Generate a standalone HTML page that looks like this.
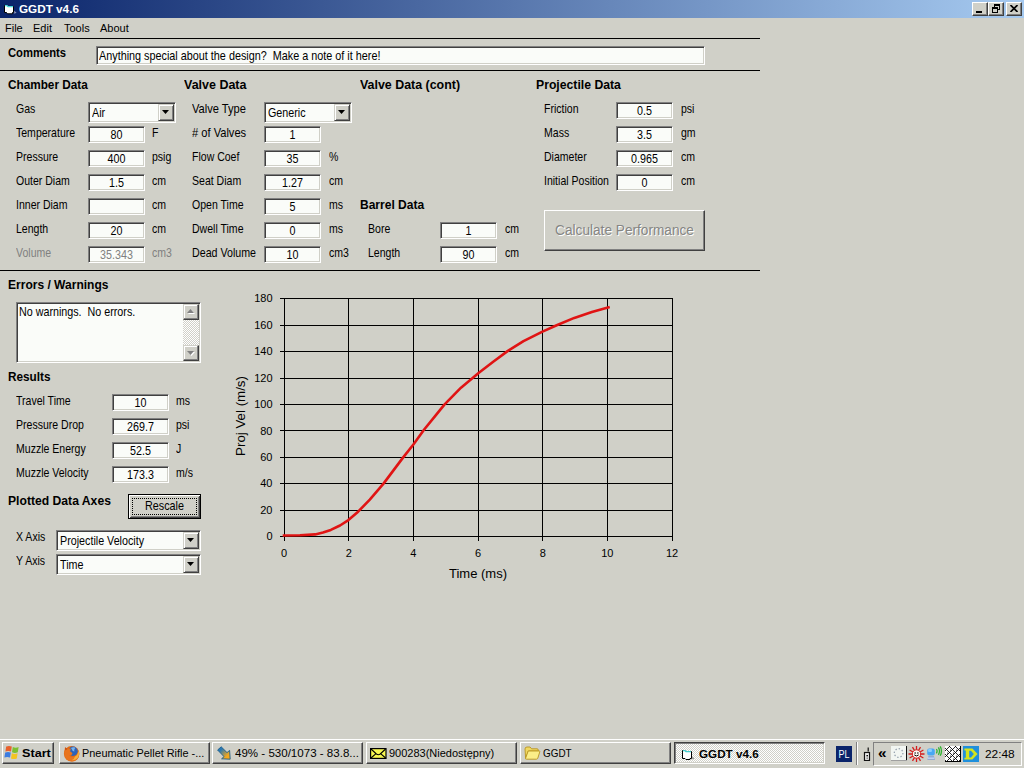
<!DOCTYPE html>
<html><head><meta charset="utf-8"><title>GGDT v4.6</title>
<style>
html,body{margin:0;padding:0;}
body{width:1024px;height:768px;overflow:hidden;background:#d0d0c8;position:relative;font-family:"Liberation Sans",Arial,sans-serif;font-size:13px;color:#000;}
.t{position:absolute;white-space:pre;line-height:15px;height:15px;transform-origin:0 50%;}
.b{font-weight:bold;}
.in{position:absolute;box-sizing:border-box;background:#fafcf9;border:1px solid;border-color:#808080 #fff #fff #808080;box-shadow:inset 1px 1px 0 #404040,inset -1px -1px 0 #d0d0c8;overflow:hidden;}
.iv{position:absolute;left:0;right:0;white-space:pre;line-height:15px;height:15px;transform:scaleX(0.825);}
.cb{position:absolute;right:1px;top:1px;width:16px;box-sizing:border-box;background:#d0d0c8;border:1px solid;border-color:#d0d0c8 #404040 #404040 #d0d0c8;box-shadow:inset 1px 1px 0 #fff,inset -1px -1px 0 #808080;}
.sb{position:absolute;right:1px;top:1px;bottom:1px;width:16px;background:#e8e8e4 repeating-conic-gradient(#fff 0% 25%,#d0d0c8 0% 50%) 0 0/2px 2px;}
.btn.sbb{border-color:#d0d0c8 #404040 #404040 #d0d0c8;box-shadow:inset -1px -1px 0 #808080,inset 1px 1px 0 #fff;}
.hl{position:absolute;left:0;width:760px;height:1px;background:#000;}
.tb{position:absolute;left:0;top:0;width:1024px;height:18px;background:linear-gradient(to right,#0a246a 0%,#a6caf0 100%);}
.tt{position:absolute;left:19px;top:1px;transform:scaleX(1.065);transform-origin:0 50%;color:#fff;font-weight:bold;font-size:11px;line-height:16px;white-space:pre;}
.k{position:absolute;white-space:pre;font-size:11px;line-height:16px;height:16px;}
.btn.act{background:#e8e8e4 repeating-conic-gradient(#fff 0% 25%,#d0d0c8 0% 50%) 0 0/2px 2px;border-color:#404040 #fff #fff #404040;box-shadow:inset 1px 1px 0 #808080,inset -1px -1px 0 #d0d0c8;}
.btn{position:absolute;box-sizing:border-box;background:#d0d0c8;border:1px solid;border-color:#fff #404040 #404040 #fff;box-shadow:inset -1px -1px 0 #808080,inset 1px 1px 0 #d0d0c8;}
</style></head><body>

<div class="tb"><svg style="position:absolute;left:3px;top:4px" width="15" height="11" viewBox="0 0 15 11"><path d="M1.5 1.5 H4 L5 2.5 H10.5 V8.5 H9.5 V9.8 H4.5 L3.5 8.5 H1.5z" fill="#fff" stroke="#000" stroke-width="1"/><path d="M2 1.6 H4 L5 2.6 H10" stroke="#48d8d8" stroke-width="1.3" fill="none"/><path d="M11.2 6.8 L13.6 8.8 L11.2 9.8z" fill="#9098b8"/></svg><div class="tt">GGDT v4.6</div>
<div class="btn" style="left:972px;top:2px;width:16px;height:14px"><div style="position:absolute;left:3px;top:8px;width:6px;height:2px;background:#000"></div></div>
<div class="btn" style="left:988px;top:2px;width:16px;height:14px"><svg style="position:absolute;left:2px;top:1px" width="10" height="10" viewBox="0 0 10 10" shape-rendering="crispEdges"><path d="M3 0h6v2h-6zM8 2h1v4h-1zM3 2h1v1h-1zM7 5h1v1h-1z" fill="#000"/><path d="M1 3h6v2h-6zM1 5h1v4h-1zM6 5h1v4h-1zM1 8h6v1h-6z" fill="#000"/></svg></div>
<div class="btn" style="left:1006px;top:2px;width:16px;height:14px"><svg style="position:absolute;left:3px;top:2px" width="8" height="7" viewBox="0 0 8 7"><path d="M0.5 0 L7.5 7 M7.5 0 L0.5 7" stroke="#000" stroke-width="1.7"/></svg></div>
</div>
<div class="t" style="left:5px;top:21px;font-size:11px;transform:none">File</div>
<div class="t" style="left:33px;top:21px;font-size:11px;transform:none">Edit</div>
<div class="t" style="left:64px;top:21px;font-size:11px;transform:none">Tools</div>
<div class="t" style="left:100px;top:21px;font-size:11px;transform:none">About</div>
<div class="hl" style="top:38px"></div>
<div class="t b" style="left:8px;top:45px;transform:scaleX(0.865);">Comments</div>
<div class="in" style="left:96px;top:46px;width:609px;height:19px;"><div class="iv" style="text-align:left;top:1px;left:2px;transform-origin:0 50%;transform:scaleX(.832);">Anything special about the design?  Make a note of it here!</div></div>
<div class="hl" style="top:70px"></div>
<div class="t b" style="left:8px;top:77px;transform:scaleX(0.905);">Chamber Data</div>
<div class="t b" style="left:184px;top:77px;transform:scaleX(0.96);">Valve Data</div>
<div class="t b" style="left:360px;top:77px;transform:scaleX(0.955);">Valve Data (cont)</div>
<div class="t b" style="left:536px;top:77px;transform:scaleX(0.94);">Projectile Data</div>
<div class="t " style="left:16px;top:101px;transform:scaleX(0.81);">Gas</div>
<div class="in" style="left:88px;top:102px;width:88px;height:21px;"><div class="iv" style="text-align:left;left:3px;top:2px;transform-origin:0 50%">Air</div><div class="cb" style="height:17px"><svg width="7" height="4" viewBox="0 0 7 4" style="position:absolute;left:3px;top:5px"><path d="M0 0h7L3.5 4z" fill="#000"/></svg></div></div>
<div class="t " style="left:16px;top:125px;transform:scaleX(0.81);">Temperature</div>
<div class="in" style="left:88px;top:126px;width:57px;height:17px;"><div class="iv" style="text-align:center;top:0px;">80</div></div>
<div class="t " style="left:152px;top:125px;transform:scaleX(0.81);">F</div>
<div class="t " style="left:16px;top:149px;transform:scaleX(0.81);">Pressure</div>
<div class="in" style="left:88px;top:150px;width:57px;height:17px;"><div class="iv" style="text-align:center;top:0px;">400</div></div>
<div class="t " style="left:152px;top:149px;transform:scaleX(0.81);">psig</div>
<div class="t " style="left:16px;top:173px;transform:scaleX(0.81);">Outer Diam</div>
<div class="in" style="left:88px;top:174px;width:57px;height:17px;"><div class="iv" style="text-align:center;top:0px;">1.5</div></div>
<div class="t " style="left:152px;top:173px;transform:scaleX(0.81);">cm</div>
<div class="t " style="left:16px;top:197px;transform:scaleX(0.81);">Inner Diam</div>
<div class="in" style="left:88px;top:198px;width:57px;height:17px;"><div class="iv" style="text-align:center;top:0px;"></div></div>
<div class="t " style="left:152px;top:197px;transform:scaleX(0.81);">cm</div>
<div class="t " style="left:16px;top:221px;transform:scaleX(0.81);">Length</div>
<div class="in" style="left:88px;top:222px;width:57px;height:17px;"><div class="iv" style="text-align:center;top:0px;">20</div></div>
<div class="t " style="left:152px;top:221px;transform:scaleX(0.81);">cm</div>
<div class="t " style="left:16px;top:245px;transform:scaleX(0.81);color:#808080;">Volume</div>
<div class="in" style="left:88px;top:246px;width:57px;height:17px;"><div class="iv" style="color:#808080;text-align:center;top:0px;">35.343</div></div>
<div class="t " style="left:152px;top:245px;transform:scaleX(0.81);color:#808080;">cm3</div>
<div class="t " style="left:192px;top:101px;transform:scaleX(0.855);">Valve Type</div>
<div class="in" style="left:264px;top:102px;width:88px;height:21px;"><div class="iv" style="text-align:left;left:3px;top:2px;transform-origin:0 50%">Generic</div><div class="cb" style="height:17px"><svg width="7" height="4" viewBox="0 0 7 4" style="position:absolute;left:3px;top:5px"><path d="M0 0h7L3.5 4z" fill="#000"/></svg></div></div>
<div class="t " style="left:192px;top:125px;transform:scaleX(0.855);"># of Valves</div>
<div class="in" style="left:264px;top:126px;width:57px;height:17px;"><div class="iv" style="text-align:center;top:0px;">1</div></div>
<div class="t " style="left:192px;top:149px;transform:scaleX(0.81);">Flow Coef</div>
<div class="in" style="left:264px;top:150px;width:57px;height:17px;"><div class="iv" style="text-align:center;top:0px;">35</div></div>
<div class="t " style="left:329px;top:149px;transform:scaleX(0.81);">%</div>
<div class="t " style="left:192px;top:173px;transform:scaleX(0.81);">Seat Diam</div>
<div class="in" style="left:264px;top:174px;width:57px;height:17px;"><div class="iv" style="text-align:center;top:0px;">1.27</div></div>
<div class="t " style="left:329px;top:173px;transform:scaleX(0.81);">cm</div>
<div class="t " style="left:192px;top:197px;transform:scaleX(0.81);">Open Time</div>
<div class="in" style="left:264px;top:198px;width:57px;height:17px;"><div class="iv" style="text-align:center;top:0px;">5</div></div>
<div class="t " style="left:329px;top:197px;transform:scaleX(0.81);">ms</div>
<div class="t " style="left:192px;top:221px;transform:scaleX(0.81);">Dwell Time</div>
<div class="in" style="left:264px;top:222px;width:57px;height:17px;"><div class="iv" style="text-align:center;top:0px;">0</div></div>
<div class="t " style="left:329px;top:221px;transform:scaleX(0.81);">ms</div>
<div class="t " style="left:192px;top:245px;transform:scaleX(0.82);">Dead Volume</div>
<div class="in" style="left:264px;top:246px;width:57px;height:17px;"><div class="iv" style="text-align:center;top:0px;">10</div></div>
<div class="t " style="left:329px;top:245px;transform:scaleX(0.81);">cm3</div>
<div class="t b" style="left:360px;top:197px;transform:scaleX(0.925);">Barrel Data</div>
<div class="t " style="left:368px;top:221px;transform:scaleX(0.81);">Bore</div>
<div class="in" style="left:440px;top:222px;width:57px;height:17px;"><div class="iv" style="text-align:center;top:0px;">1</div></div>
<div class="t " style="left:505px;top:221px;transform:scaleX(0.81);">cm</div>
<div class="t " style="left:368px;top:245px;transform:scaleX(0.81);">Length</div>
<div class="in" style="left:440px;top:246px;width:57px;height:17px;"><div class="iv" style="text-align:center;top:0px;">90</div></div>
<div class="t " style="left:505px;top:245px;transform:scaleX(0.81);">cm</div>
<div class="t " style="left:544px;top:101px;transform:scaleX(0.81);">Friction</div>
<div class="in" style="left:616px;top:102px;width:57px;height:17px;"><div class="iv" style="text-align:center;top:0px;">0.5</div></div>
<div class="t " style="left:681px;top:101px;transform:scaleX(0.81);">psi</div>
<div class="t " style="left:544px;top:125px;transform:scaleX(0.81);">Mass</div>
<div class="in" style="left:616px;top:126px;width:57px;height:17px;"><div class="iv" style="text-align:center;top:0px;">3.5</div></div>
<div class="t " style="left:681px;top:125px;transform:scaleX(0.81);">gm</div>
<div class="t " style="left:544px;top:149px;transform:scaleX(0.81);">Diameter</div>
<div class="in" style="left:616px;top:150px;width:57px;height:17px;"><div class="iv" style="text-align:center;top:0px;">0.965</div></div>
<div class="t " style="left:681px;top:149px;transform:scaleX(0.81);">cm</div>
<div class="t " style="left:544px;top:173px;transform:scaleX(0.81);">Initial Position</div>
<div class="in" style="left:616px;top:174px;width:57px;height:17px;"><div class="iv" style="text-align:center;top:0px;">0</div></div>
<div class="t " style="left:681px;top:173px;transform:scaleX(0.81);">cm</div>
<div class="btn" style="left:544px;top:210px;width:161px;height:41px"><div class="t" style="left:0;right:0;top:12px;text-align:center;color:#858583;text-shadow:1px 1px 0 #fff;transform:scaleX(0.975);transform-origin:50% 50%;font-size:14px">Calculate Performance</div></div>
<div class="hl" style="top:270px"></div>
<div class="t b" style="left:8px;top:277px;transform:scaleX(0.925);">Errors / Warnings</div>
<div class="in" style="left:16px;top:302px;width:185px;height:61px"><div class="iv" style="text-align:left;left:2px;top:1px;transform-origin:0 50%">No warnings.  No errors.</div><div class="sb"><div class="btn sbb" style="left:0;top:0;width:16px;height:16px"><svg style="position:absolute;left:3px;top:4px" width="8" height="5" viewBox="0 0 8 5"><path d="M1 5h7L4.5 1z" fill="#fff"/><path d="M0 4h7L3.5 0z" fill="#808080"/></svg></div><div class="btn sbb" style="left:0;bottom:0;width:16px;height:16px"><svg style="position:absolute;left:3px;top:5px" width="8" height="5" viewBox="0 0 8 5"><path d="M1 1h7L4.5 5z" fill="#fff"/><path d="M0 0h7L3.5 4z" fill="#808080"/></svg></div></div></div>
<div class="t b" style="left:8px;top:369px;transform:scaleX(0.905);">Results</div>
<div class="t " style="left:16px;top:393px;transform:scaleX(0.81);">Travel Time</div>
<div class="in" style="left:112px;top:394px;width:57px;height:17px;"><div class="iv" style="text-align:center;top:0px;">10</div></div>
<div class="t " style="left:176px;top:393px;transform:scaleX(0.81);">ms</div>
<div class="t " style="left:16px;top:417px;transform:scaleX(0.81);">Pressure Drop</div>
<div class="in" style="left:112px;top:418px;width:57px;height:17px;"><div class="iv" style="text-align:center;top:0px;">269.7</div></div>
<div class="t " style="left:176px;top:417px;transform:scaleX(0.81);">psi</div>
<div class="t " style="left:16px;top:441px;transform:scaleX(0.81);">Muzzle Energy</div>
<div class="in" style="left:112px;top:442px;width:57px;height:17px;"><div class="iv" style="text-align:center;top:0px;">52.5</div></div>
<div class="t " style="left:176px;top:441px;transform:scaleX(0.81);">J</div>
<div class="t " style="left:16px;top:465px;transform:scaleX(0.81);">Muzzle Velocity</div>
<div class="in" style="left:112px;top:466px;width:57px;height:17px;"><div class="iv" style="text-align:center;top:0px;">173.3</div></div>
<div class="t " style="left:176px;top:465px;transform:scaleX(0.81);">m/s</div>
<div class="t b" style="left:8px;top:493px;transform:scaleX(0.935);">Plotted Data Axes</div>
<div class="btn" style="left:128px;top:494px;width:73px;height:25px;border-color:#000;box-shadow:inset 1px 1px 0 #fff,inset -1px -1px 0 #404040,inset 2px 2px 0 #d0d0c8,inset -2px -2px 0 #808080"><div class="t" style="left:0;right:0;top:3px;text-align:center;transform:scaleX(.83);transform-origin:50% 50%">Rescale</div><div style="position:absolute;left:3px;top:3px;right:3px;bottom:3px;border:1px dotted #000"></div></div>
<div class="t " style="left:16px;top:529px;transform:scaleX(0.81);">X Axis</div>
<div class="in" style="left:56px;top:530px;width:145px;height:21px;"><div class="iv" style="text-align:left;left:3px;top:2px;transform-origin:0 50%">Projectile Velocity</div><div class="cb" style="height:17px"><svg width="7" height="4" viewBox="0 0 7 4" style="position:absolute;left:3px;top:5px"><path d="M0 0h7L3.5 4z" fill="#000"/></svg></div></div>
<div class="t " style="left:16px;top:553px;transform:scaleX(0.81);">Y Axis</div>
<div class="in" style="left:56px;top:554px;width:145px;height:21px;"><div class="iv" style="text-align:left;left:3px;top:2px;transform-origin:0 50%">Time</div><div class="cb" style="height:17px"><svg width="7" height="4" viewBox="0 0 7 4" style="position:absolute;left:3px;top:5px"><path d="M0 0h7L3.5 4z" fill="#000"/></svg></div></div>
<svg style="position:absolute;left:0;top:280px" width="760" height="320" viewBox="0 280 760 320" font-family="Liberation Sans, Arial, sans-serif" shape-rendering="crispEdges">
<rect x="280" y="298" width="393" height="1" fill="#000"/>
<rect x="280" y="325" width="393" height="1" fill="#000"/>
<rect x="280" y="351" width="393" height="1" fill="#000"/>
<rect x="280" y="378" width="393" height="1" fill="#000"/>
<rect x="280" y="404" width="393" height="1" fill="#000"/>
<rect x="280" y="430" width="393" height="1" fill="#000"/>
<rect x="280" y="457" width="393" height="1" fill="#000"/>
<rect x="280" y="483" width="393" height="1" fill="#000"/>
<rect x="280" y="510" width="393" height="1" fill="#000"/>
<rect x="280" y="536" width="393" height="1" fill="#000"/>
<rect x="284" y="298" width="1" height="243" fill="#000"/>
<rect x="348" y="298" width="1" height="243" fill="#000"/>
<rect x="413" y="298" width="1" height="243" fill="#000"/>
<rect x="478" y="298" width="1" height="243" fill="#000"/>
<rect x="542" y="298" width="1" height="243" fill="#000"/>
<rect x="607" y="298" width="1" height="243" fill="#000"/>
<rect x="672" y="298" width="1" height="243" fill="#000"/>
<text x="272.5" y="302.3" font-size="11" text-anchor="end">180</text>
<text x="272.5" y="328.7" font-size="11" text-anchor="end">160</text>
<text x="272.5" y="355.2" font-size="11" text-anchor="end">140</text>
<text x="272.5" y="381.6" font-size="11" text-anchor="end">120</text>
<text x="272.5" y="408.1" font-size="11" text-anchor="end">100</text>
<text x="272.5" y="434.5" font-size="11" text-anchor="end">80</text>
<text x="272.5" y="461.0" font-size="11" text-anchor="end">60</text>
<text x="272.5" y="487.4" font-size="11" text-anchor="end">40</text>
<text x="272.5" y="513.9" font-size="11" text-anchor="end">20</text>
<text x="272.5" y="540.3" font-size="11" text-anchor="end">0</text>
<text x="284.0" y="557" font-size="11" text-anchor="middle">0</text>
<text x="348.7" y="557" font-size="11" text-anchor="middle">2</text>
<text x="413.3" y="557" font-size="11" text-anchor="middle">4</text>
<text x="478.0" y="557" font-size="11" text-anchor="middle">6</text>
<text x="542.7" y="557" font-size="11" text-anchor="middle">8</text>
<text x="607.3" y="557" font-size="11" text-anchor="middle">10</text>
<text x="672.0" y="557" font-size="11" text-anchor="middle">12</text>
<text x="478" y="578" font-size="13" text-anchor="middle">Time (ms)</text>
<text transform="translate(244.7,416) rotate(-90)" font-size="13.3" text-anchor="middle">Proj Vel (m/s)</text>
<path d="M284 535.5 L300 535.3 L315.2 534.4 L323 532.6 L330.8 529.9 L340 525.5 L348.4 520.1 L358.1 511.7 L369.8 499.6 L383.5 483.6 L403 457.6 L413.4 444.5 L424.2 429.5 L436.3 414.6 L444.4 404.6 L461 387.7 L478.6 373.0 L493.2 361.7 L507.9 350.9 L523.5 341.2 L542.5 331.6 L556.7 325.2 L574.3 317.9 L591.9 312.1 L608.5 307.4" fill="none" stroke="#e01414" stroke-width="2.6" stroke-linejoin="round" stroke-linecap="square" shape-rendering="auto"/>
</svg>
<div style="position:absolute;left:0;top:738px;width:1024px;height:30px;background:#d0d0c8"></div>
<div style="position:absolute;left:0;top:739px;width:1024px;height:1px;background:#fff"></div>
<div class="btn" style="left:2px;top:742px;width:52px;height:22px"><svg style="position:absolute;left:1px;top:2px" width="16" height="16" viewBox="0 0 16 16"><path d="M2.2 1.6 Q5 0.2 7.8 1.6 L7 6.6 Q4.2 5.3 1.4 6.6z" fill="#e8602c"/><path d="M8.8 2 Q11.6 3.4 14.6 2 L13.8 7.2 Q10.8 8.6 8 7.2z" fill="#7cc030"/><path d="M1.2 7.6 Q4 6.3 6.8 7.6 L6 12.6 Q3.2 11.3 0.4 12.6z" fill="#3c7ce0"/><path d="M7.8 8.2 Q10.8 9.6 13.6 8.2 L12.8 13.4 Q9.8 14.8 7 13.4z" fill="#f4c420"/></svg><div class="k" style="left:19px;top:2px;font-weight:bold;font-size:11px;transform:scaleX(1.15);transform-origin:0 50%">Start</div></div>
<div class="btn" style="left:59px;top:742px;width:151px;height:22px"><svg style="position:absolute;left:3px;top:2px" width="17" height="17" viewBox="0 0 17 17"><circle cx="8.6" cy="8.8" r="7.7" fill="#e06a14"/><circle cx="10" cy="6.2" r="4.7" fill="#2c62b8"/><path d="M8 3 Q10 1.6 12.4 2.6 Q11 4.6 11.4 6.6 Q9.4 6.4 8 3z" fill="#78b4ec"/><path d="M1.4 6.4 L2 2.2 L4.4 4 Q6.4 3 8.2 3.8 Q6.6 5.4 7.6 7 Q9.6 7.4 9.4 9 Q8.2 10.8 6 10.2 Q8 13 12 11.6 Q15 10 15.4 5.4 Q17.6 10.4 14.4 14.2 Q11 17.6 6 15.8 Q1 13.6 1.4 6.4z" fill="#e8741c"/><path d="M12 11.6 Q15 10 15.4 5.4 Q17 9.6 14.6 13 Q12 15.6 8.6 15.2 Q11.6 14 12 11.6z" fill="#f6b03a"/><path d="M2 2.2 L4.4 4 L2.4 5.4z" fill="#c84c10"/></svg><div class="k" style="left:22px;top:2px;transform:scaleX(0.99);transform-origin:0 50%">Pneumatic Pellet Rifle -...</div></div>
<div class="btn" style="left:212px;top:742px;width:151px;height:22px"><svg style="position:absolute;left:4px;top:3px" width="16" height="16" viewBox="0 0 16 16"><defs><linearGradient id="dlg" x1="0" y1="0" x2="1" y2="1"><stop offset="0.25" stop-color="#2878b4"/><stop offset="0.75" stop-color="#f4a81c"/></linearGradient></defs><path d="M0.6 4 L4.2 0.8 L10 6.6 L12.6 4.4 L13.2 13.2 L4.6 12.8 L7 10.6z" fill="url(#dlg)" stroke="#1c5c88" stroke-width="0.9" stroke-linejoin="round"/></svg><div class="k" style="left:22px;top:2px;transform:scaleX(1.05);transform-origin:0 50%">49% - 530/1073 - 83.8...</div></div>
<div class="btn" style="left:366px;top:742px;width:151px;height:22px"><svg style="position:absolute;left:3px;top:5px" width="17" height="11" viewBox="0 0 17 11"><rect x="0.6" y="0.6" width="15.4" height="9.8" fill="#f8f850" stroke="#000" stroke-width="1.2"/><path d="M1 1 L6.4 6 Q8.3 7.4 10.2 6 L15.6 1 M1 10 L6 5.6 M15.6 10 L10.6 5.6" fill="none" stroke="#000" stroke-width="1.1"/></svg><div class="k" style="left:22px;top:2px;transform:scaleX(1.0);transform-origin:0 50%">900283(Niedostępny)</div></div>
<div class="btn" style="left:520px;top:742px;width:151px;height:22px"><svg style="position:absolute;left:3px;top:3px" width="17" height="15" viewBox="0 0 17 15"><path d="M1 3 Q1 1 3 1 H6 L7.6 2.8 H13 Q14.4 2.8 14.4 4.4 V5 H4.4 L1.6 12.4z" fill="#f0d860" stroke="#b89420" stroke-width="0.9"/><path d="M4.2 5 H15.4 Q16 5 15.8 5.8 L13.8 12.2 Q13.4 13.2 12.4 13.2 H2.4 Q1.2 13.2 1.6 12.2z" fill="#fbeE88" stroke="#b89420" stroke-width="0.9"/></svg><div class="k" style="left:22px;top:2px;transform:scaleX(0.9);transform-origin:0 50%">GGDT</div></div>
<div class="btn act" style="left:674px;top:742px;width:151px;height:22px"><svg style="position:absolute;left:6px;top:6px" width="16" height="12" viewBox="0 0 16 12"><path d="M1.5 1.5 H4 L5 2.5 H10.5 V9.5 H9 V10.5 H5 L4 9.5 H1.5z" fill="#fff" stroke="#000" stroke-width="1"/><path d="M2 1.6 H4 L5 2.6 H10" stroke="#40d0d0" stroke-width="1.3" fill="none"/><path d="M11.2 7.6 L13.4 9.6 L11.2 10.6z" fill="#909090"/></svg><div class="k" style="left:24px;top:3px;font-weight:bold;font-size:11px;transform:scaleX(1.06);transform-origin:0 50%">GGDT v4.6</div></div>
<div style="position:absolute;left:836px;top:746px;width:16px;height:16px;background:#0a246a;color:#fff;font-size:10px;line-height:17px;text-align:center"><span style="display:inline-block;transform:scaleX(.9)">PL</span></div>
<div style="position:absolute;left:856px;top:742px;width:1px;height:23px;background:#808080"></div><div style="position:absolute;left:857px;top:742px;width:1px;height:23px;background:#fff"></div>
<svg style="position:absolute;left:863px;top:747px" width="8" height="14" viewBox="0 0 8 14"><rect x="1.5" y="5.5" width="5" height="8" fill="#f0f0f0" stroke="#111" stroke-width="1.2"/><rect x="4.6" y="0.5" width="1.2" height="4" fill="#111"/><rect x="3.4" y="8" width="1.6" height="1.4" fill="#111"/><rect x="3.4" y="10.6" width="1.6" height="1" fill="#555"/></svg>
<div style="position:absolute;left:873px;top:742px;width:149px;height:24px;box-sizing:border-box;border:1px solid;border-color:#808080 #fff #fff #808080"></div>
<div class="k" style="left:877.5px;top:745px;font-weight:bold;font-size:14px;transform:scaleX(1.1);transform-origin:0 50%">«</div>
<svg style="position:absolute;left:891px;top:746px" width="16" height="15" viewBox="0 0 16 15"><rect x="0" y="0" width="16" height="15" fill="#a0a0a0"/><rect x="15" y="0" width="1" height="14" fill="#101010"/><rect x="0" y="0" width="15" height="14" fill="#f2f6f2"/><circle cx="7.6" cy="7" r="4.3" fill="none" stroke="#98a4b0" stroke-width="1.3" stroke-dasharray="1.4 1.9"/></svg>
<svg style="position:absolute;left:908px;top:746px" width="17" height="16" viewBox="0 0 17 16"><path d="M12.5 8.0 L16.5 8.0 M12.0 10.0 L15.4 12.0 M10.5 11.5 L12.5 14.9 M8.5 12.0 L8.5 16.0 M6.5 11.5 L4.5 14.9 M5.0 10.0 L1.6 12.0 M4.5 8.0 L0.5 8.0 M5.0 6.0 L1.6 4.0 M6.5 4.5 L4.5 1.1 M8.5 4.0 L8.5 0.0 M10.5 4.5 L12.5 1.1 M12.0 6.0 L15.4 4.0" fill="none" stroke="#d41c1c" stroke-width="1.3"/><circle cx="8.5" cy="8" r="4.2" fill="#fff8f2" stroke="#d41c1c" stroke-width="1"/><circle cx="7.1" cy="6.9" r=".75" fill="#000"/><circle cx="9.9" cy="6.9" r=".75" fill="#000"/><path d="M6.3 8.9 Q8.5 11 10.7 8.9" stroke="#000" fill="none" stroke-width="1"/></svg>
<svg style="position:absolute;left:926px;top:746px" width="17" height="15" viewBox="0 0 17 15"><rect x="1.2" y="2.4" width="7.6" height="7" rx="2" fill="#48a8f4"/><rect x="2" y="3" width="4" height="3" rx="1.2" fill="#88ccfc"/><path d="M2.4 10.6 H8 L9 13.6 H1.4z" fill="#5c84d4"/><rect x="1.6" y="11.4" width="7" height="1.4" fill="#d8e4f8"/><path d="M10.4 3 Q11.8 5 10.4 7.4 M12.4 1.4 Q14.6 5 12.4 8.8 M14.2 0.4 Q16.8 5 14.2 9.8" fill="none" stroke="#30b430" stroke-width="1.3"/></svg>
<svg style="position:absolute;left:945px;top:746px" width="16" height="16" viewBox="0 0 16 16"><rect width="16" height="16" fill="#fff"/><g stroke="#000" stroke-width="0.85" fill="none"><path d="M-1 6 L6 -1 M-1 12 L12 -1 M2 15 L17 0 M8 15 L17 6 M13 16 L17 12"/><path d="M3 -1 L17 13 M9 -1 L17 7 M-1 1 L15 17 M-1 7 L9 17 M-1 13 L3 17"/></g><g fill="#000"><circle cx="5.5" cy="4" r=".55"/><circle cx="8.5" cy="7" r=".55"/><circle cx="2.5" cy="7" r=".55"/><circle cx="11.5" cy="10" r=".55"/><circle cx="5.5" cy="10" r=".55"/><circle cx="11.5" cy="4" r=".55"/><circle cx="8.5" cy="13" r=".55"/></g><rect x="15" y="0" width="1" height="16" fill="#000"/><rect x="0" y="15" width="16" height="1" fill="#000"/></svg>
<svg style="position:absolute;left:963px;top:746px" width="16" height="16" viewBox="0 0 16 16"><rect width="16" height="16" fill="#2090dc"/><path d="M1.4 2.6 H9.4 L14.6 8 L9.4 13.6 H1.4 V11.8 H2.8 V4.4 H1.4z" fill="#d4e41c"/><path d="M6.2 4.8 H8 L10.8 8 L8 11.4 H6.2z" fill="#2090dc"/></svg>
<div class="k" style="left:985px;top:746px;transform:scaleX(1.08);transform-origin:0 50%">22:48</div>
</body></html>
